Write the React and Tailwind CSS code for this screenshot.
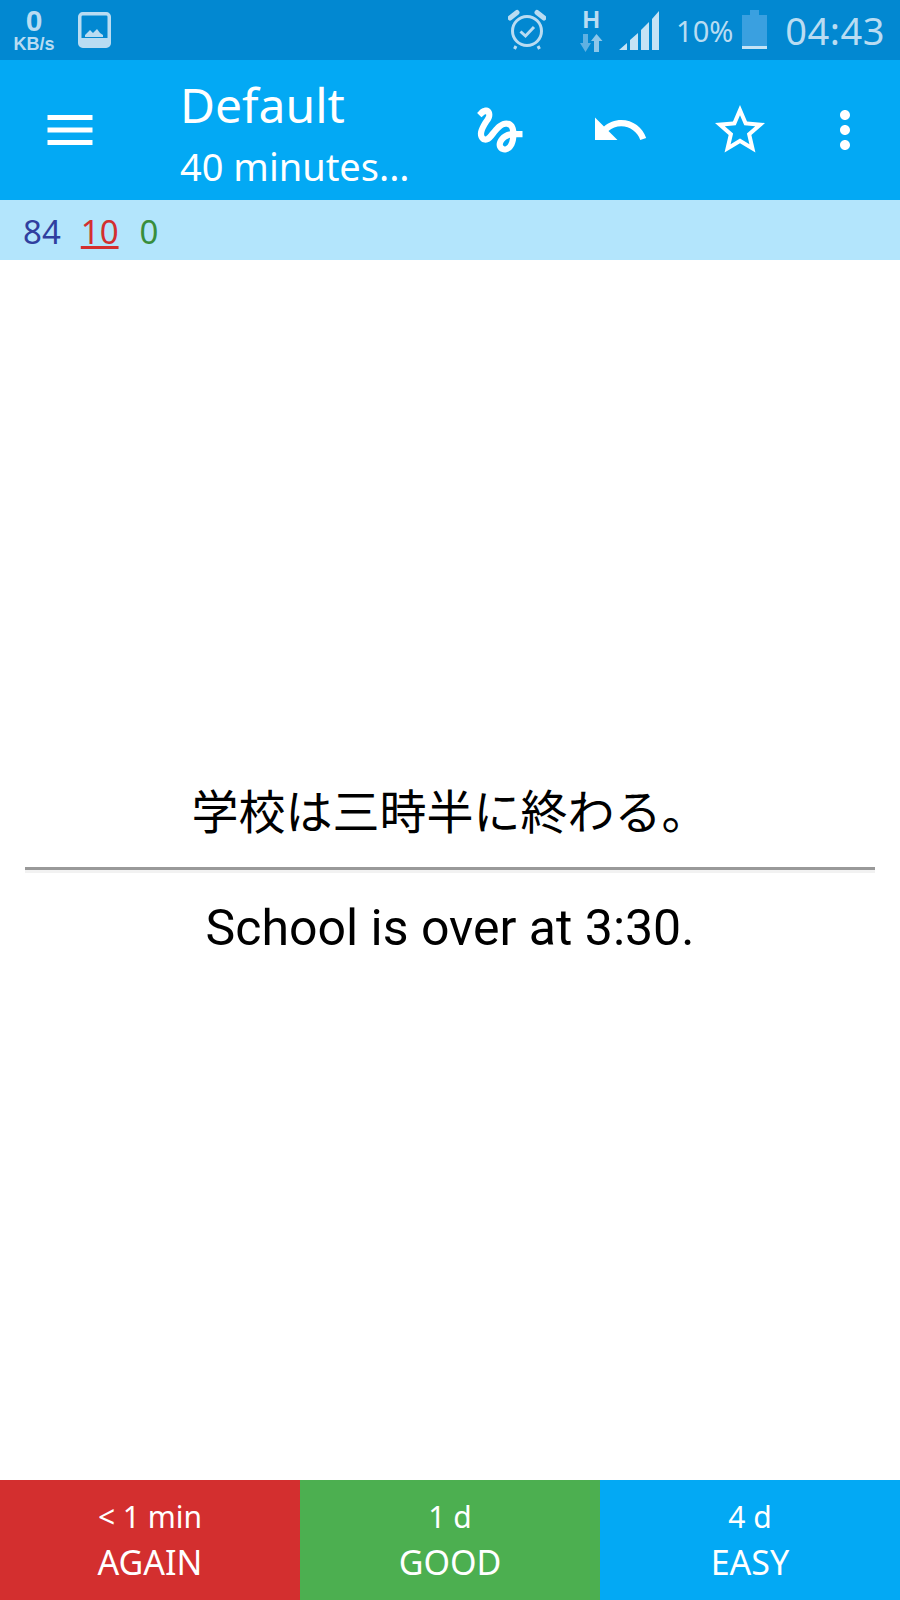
function IconBtn({ d, className }) {
  return (
    <div className={`flex h-full items-center justify-center shrink-0 ${className}`}>
      <svg width="60" height="60" viewBox="0 0 24 24" fill="#fff"><path d={d} /></svg>
    </div>
  );
}

function StatusBar() {
  return (
    <div className="flex h-[60px] items-center bg-[#0288d1] text-[#b9dcf2] font-['Noto_Sans','Open_Sans',sans-serif]">
      <div className="ml-[13px] mb-[2px] flex w-[42px] flex-col items-center font-['Liberation_Sans',sans-serif] font-bold">
        <span className="text-[30px] leading-[30px]">0</span>
        <span className="text-[18px] leading-[16px]">KB/s</span>
      </div>
      <svg className="ml-[23px]" width="33" height="36" viewBox="0 0 33 36">
        <rect x="1.75" y="1.75" width="29.5" height="32.5" rx="3" fill="none" stroke="#b9dcf2" strokeWidth="3.5" />
        <rect x="3" y="26" width="27" height="8" fill="#b9dcf2" />
        <path d="M7 25 L7 23 L12 18 L15 21 L19 17 L22 21 L25 23 L25 25Z" fill="#b9dcf2" />
      </svg>
      <svg className="ml-auto" width="38" height="42" viewBox="0 0 38 42" fill="none" stroke="#b9dcf2">
        <circle cx="19" cy="22" r="14.5" strokeWidth="3" />
        <path d="M12.5 22.5 L17.5 27 L26 18" strokeWidth="3" />
        <path d="M2 9 L9 3.5 M29 3.5 L36 9" strokeWidth="5" strokeLinecap="round" />
        <path d="M8 37 L6.5 40 M30 37 L31.5 40" strokeWidth="3" />
      </svg>
      <div className="ml-[33px] flex w-[24px] flex-col items-center">
        <span className="text-[24px] leading-[22px] font-bold font-['Liberation_Sans',sans-serif]">H</span>
        <svg className="mt-[3px]" width="24" height="18" viewBox="0 0 24 18">
          <path d="M4 0h5v9h3l-5.5 9L1 9h3z" fill="#5fb1e2" />
          <path d="M15 18h5V7h3.5L17.5 0 12 7h3z" fill="#8dc6e9" />
        </svg>
      </div>
      <svg className="ml-[16px]" width="40" height="40" viewBox="0 0 40 40" fill="#c6e3f5">
        <path d="M0 40 L8 33 V40Z M11 30 L19 23 V40 H11Z M22 20 L30 12 V40 H22Z M33 9 L40 1 V40 H33Z" />
      </svg>
      <span className="ml-[17px] text-[29px] leading-none">10%</span>
      <svg className="ml-[9px]" width="25" height="40" viewBox="0 0 25 40">
        <rect x="8" y="0" width="9" height="5" fill="#3aa0e0" />
        <rect x="0" y="5" width="25" height="31" fill="#3aa0e0" />
        <rect x="0" y="36" width="25" height="3" fill="#c6e3f5" />
      </svg>
      <span className="ml-[18px] mr-[15px] text-[38px] leading-none tracking-[0.5px]">04:43</span>
    </div>
  );
}

function Toolbar() {
  return (
    <div className="flex h-[140px] items-center bg-[#03a9f4] text-white font-['Noto_Sans','Open_Sans',sans-serif]">
      <IconBtn className="w-[60px] ml-[40px]" d="M3 18h18v-2H3v2zm0-5h18v-2H3v2zm0-7v2h18V6H3z" />
      <div className="ml-[80px] flex w-[260px] flex-col">
        <span className="text-[48px] leading-[72px]">Default</span>
        <span className="text-[38px] leading-[50px]">40 minutes...</span>
      </div>
      <IconBtn className="w-[120px]" d="M4.59 6.89c.7-.71 1.4-1.35 1.71-1.22.5.2 0 1.03-.3 1.52-.25.42-2.86 3.89-2.86 6.31 0 1.28.48 2.34 1.34 2.98.75.56 1.74.73 2.64.46 1.07-.31 1.95-1.4 3.06-2.77 1.21-1.49 2.83-3.44 4.08-3.44 1.63 0 1.65 1.01 1.76 1.79-3.78.64-5.38 3.67-5.38 5.37 0 1.7 1.44 3.09 3.21 3.09 1.63 0 4.29-1.33 4.69-6.1H21v-2.5h-2.47c-.15-1.65-1.09-4.2-4.03-4.2-2.25 0-4.18 1.91-4.94 2.84-.58.73-2.06 2.48-2.29 2.72-.25.3-.68.84-1.11.84-.45 0-.72-.83-.36-1.92.35-1.09 1.4-2.86 1.85-3.52.78-1.14 1.3-1.92 1.3-3.28C8.95 3.69 7.31 3 6.44 3 5.12 3 3.97 4 3.72 4.25c-.36.36-.66.66-.88.93l1.75 1.71zm9.29 11.66c-.31 0-.74-.26-.74-.72 0-.6.73-2.2 2.87-2.76-.3 2.69-1.43 3.48-2.13 3.48z" />
      <IconBtn className="w-[120px]" d="M12.5 8c-2.65 0-5.05.99-6.9 2.6L2 7v9h9l-3.62-3.62c1.39-1.16 3.16-1.88 5.12-1.88 3.54 0 6.55 2.31 7.6 5.5l2.37-.78C21.08 11.03 17.15 8 12.5 8z" />
      <IconBtn className="w-[120px]" d="M22 9.24l-7.19-.62L12 2 9.19 8.63 2 9.24l5.46 4.73L5.82 21 12 17.27 18.18 21l-1.63-7.03L22 9.24zM12 15.4l-3.76 2.27 1-4.28-3.32-2.88 4.38-.38L12 6.1l1.71 4.04 4.38.38-3.32 2.88 1 4.28L12 15.4z" />
      <IconBtn className="w-[90px]" d="M12 8c1.1 0 2-.9 2-2s-.9-2-2-2-2 .9-2 2 .9 2 2 2zm0 2c-1.1 0-2 .9-2 2s.9 2 2 2 2-.9 2-2-.9-2-2-2zm0 6c-1.1 0-2 .9-2 2s.9 2 2 2 2-.9 2-2-.9-2-2-2z" />
    </div>
  );
}

function Counts() {
  return (
    <div className="flex h-[60px] items-center bg-[#b3e5fc] pl-[23px] pt-[3px] text-[33px] leading-[42px] font-['Noto_Sans','Open_Sans',sans-serif]">
      <span className="text-[#303f9f]">84</span>
      <span className="ml-[20px] text-[#d32f2f] underline decoration-[3px] underline-offset-[2px]">10</span>
      <span className="ml-[21px] text-[#388e3c]">0</span>
    </div>
  );
}

function Card() {
  return (
    <div className="flex flex-1 flex-col justify-center bg-white px-[25px] text-center text-black font-['Roboto','Noto_Sans_CJK_JP',sans-serif]">
      <div className="pb-[22px] text-[47px] leading-[64px]">学校は三時半に終わる。</div>
      <div className="h-[6px] border-t-[3px] border-[#999999] bg-[#f2f2f2]"></div>
      <div className="pt-[26px] pb-[3px] text-[50px] leading-[58px]">School is over at 3:30.</div>
    </div>
  );
}

function Answer({ bg, time, label }) {
  return (
    <div className={`flex flex-1 flex-col items-center justify-center text-white ${bg}`}>
      <span className="text-[30px] leading-[44px]">{time}</span>
      <span className="text-[34px] leading-[46px]">{label}</span>
    </div>
  );
}

export default function App() {
  return (
    <div className="flex h-[1600px] w-[900px] flex-col overflow-hidden">
      <StatusBar />
      <Toolbar />
      <Counts />
      <Card />
      <div className="flex h-[120px] font-['Noto_Sans','Open_Sans',sans-serif]">
        <Answer bg="bg-[#d32f2f]" time="< 1 min" label="AGAIN" />
        <Answer bg="bg-[#4caf50]" time="1 d" label="GOOD" />
        <Answer bg="bg-[#03a9f4]" time="4 d" label="EASY" />
      </div>
    </div>
  );
}
